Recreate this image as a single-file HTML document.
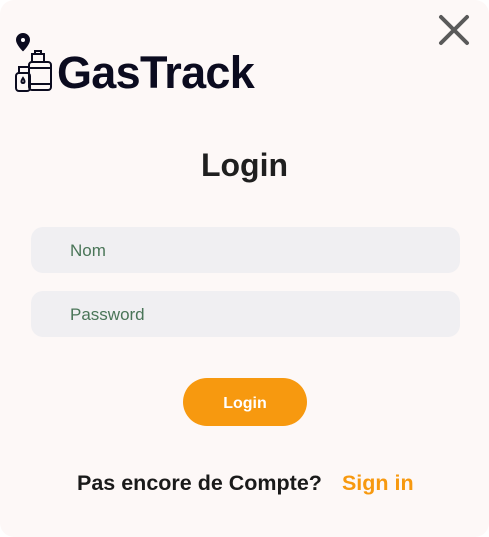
<!DOCTYPE html>
<html><head><meta charset="utf-8"><style>
html,body{margin:0;padding:0;width:489px;height:537px;background:#fff;overflow:hidden;font-family:"Liberation Sans",sans-serif}
.card{position:absolute;left:0;top:0;width:489px;height:537px;background:#fdf8f7;border-radius:14px}
.abs{position:absolute}
.inp{position:absolute;left:31px;width:429px;height:46px;background:#f0eff2;border-radius:12px;color:#4a7558;font-size:17px;line-height:48px;text-indent:39px}
</style></head><body>
<div class="card">
<svg class="abs" style="left:14px;top:32px" width="40" height="62" viewBox="0 0 40 62" fill="none" stroke="#0b0b1f" stroke-width="2">
<path d="M9 2a6 6 0 0 1 6 6c0 4-6 10-6 10s-6-6-6-10a6 6 0 0 1 6-6z" fill="#0b0b1f"/>
<circle cx="9" cy="8" r="2" fill="#fff" stroke="none"/>
<rect x="18" y="22" width="12" height="8"/><path d="M21 22v-3h6v3"/>
<rect x="15" y="30" width="22" height="28" rx="3"/>
<path d="M15 36h22M15 52h22"/>
<rect x="5" y="35" width="10" height="6"/>
<rect x="2" y="41" width="14" height="18" rx="3"/>
<path d="M9 46c-2 3-2 5 0 5s2-2 0-5z"/>
</svg>
<div class="abs" style="left:57px;top:45px;font-size:45px;font-weight:bold;color:#0b0b1f;letter-spacing:-0.7px;line-height:56px">GasTrack</div>
<svg class="abs" style="left:438px;top:14px" width="32" height="32" viewBox="0 0 32 32"><path d="M3 3L29 29M29 3L3 29" stroke="#5a5a5a" stroke-width="4" stroke-linecap="round"/></svg>
<div class="abs" style="left:0;width:489px;top:147px;text-align:center;font-size:32px;font-weight:bold;color:#1f1f1f">Login</div>
<div class="inp" style="top:227px">Nom</div>
<div class="inp" style="top:291px">Password</div>
<div class="abs" style="left:183px;top:378px;width:124px;height:48px;border-radius:24px;background:#f7990f;color:#fff;font-weight:bold;font-size:16px;line-height:52px;text-align:center">Login</div>
<div class="abs" style="left:77px;top:471px;font-size:21.5px;font-weight:bold;color:#1a1a1a;white-space:nowrap">Pas encore de Compte?<span style="color:#f7990f;margin-left:20px">Sign in</span></div>
</div>
</body></html>
